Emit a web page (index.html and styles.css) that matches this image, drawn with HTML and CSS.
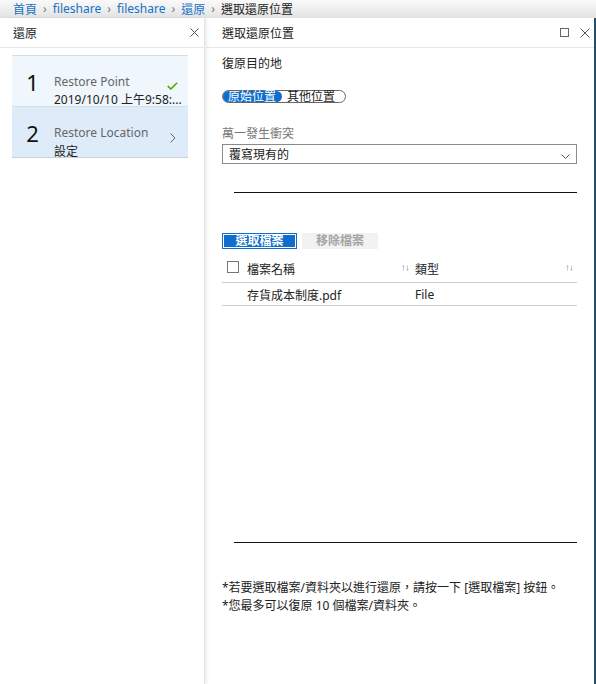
FILE: index.html
```html
<!DOCTYPE html>
<html lang="zh-Hant">
<head>
    <meta charset="UTF-8">
    <title>選取還原位置</title>
    <link rel="stylesheet" href="styles.css">
</head>
<body>

    <div class="crumbs">
        <a>首頁</a><span class="sep">›</span><a>fileshare</a><span class="sep">›</span><a>fileshare</a><span class="sep">›</span><a>還原</a><span class="sep">›</span><span class="cur">選取還原位置</span>
    </div>

    <div class="blades">

        <section class="blade left">
            <div class="blade-head">
                <h1>還原</h1>
                <div class="head-icons">
                    <svg width="9" height="9" viewBox="0 0 9 9"><path d="M0.5 0.5L8.5 8.5M8.5 0.5L0.5 8.5" stroke="#555" stroke-width="1" fill="none"/></svg>
                </div>
            </div>
            <div class="steps">
                <div class="step done">
                    <div class="num">1</div>
                    <div class="step-text">
                        <div class="step-title">
                            <span>Restore Point</span>
                            <svg class="step-icon" width="11" height="8" viewBox="0 0 11 8"><path d="M0.8 4L3.8 7L10.2 0.8" stroke="#57a300" stroke-width="1.6" fill="none"/></svg>
                        </div>
                        <div class="step-sub">2019/10/10 上午9:58:...</div>
                    </div>
                </div>
                <div class="step active">
                    <div class="num">2</div>
                    <div class="step-text">
                        <div class="step-title">
                            <span>Restore Location</span>
                            <svg class="step-icon" width="6" height="10" viewBox="0 0 6 10"><path d="M0.5 0.5L5 5L0.5 9.5" stroke="#666" stroke-width="1" fill="none"/></svg>
                        </div>
                        <div class="step-sub">設定</div>
                    </div>
                </div>
            </div>
        </section>

        <section class="blade right">
            <div class="blade-head">
                <h1>選取還原位置</h1>
                <div class="head-icons">
                    <svg width="9" height="9" viewBox="0 0 9 9"><rect x="0.5" y="0.5" width="8" height="8" stroke="#666" fill="none"/></svg>
                    <svg width="10" height="10" viewBox="0 0 10 10"><path d="M0.5 0.5L9.5 9.5M9.5 0.5L0.5 9.5" stroke="#555" stroke-width="1" fill="none"/></svg>
                </div>
            </div>

            <div class="blade-body">
                <div class="section-title">復原目的地</div>

                <div class="toggle">
                    <span class="opt on">原始位置</span>
                    <span class="opt">其他位置</span>
                </div>

                <div class="field-label">萬一發生衝突</div>
                <div class="dropdown">
                    <span>覆寫現有的</span>
                    <svg width="9" height="5" viewBox="0 0 9 5"><path d="M0.5 0.5L4.5 4.5L8.5 0.5" stroke="#555" fill="none"/></svg>
                </div>

                <div class="rule top-rule"></div>

                <div class="buttons">
                    <button class="btn primary">選取檔案</button>
                    <button class="btn disabled">移除檔案</button>
                </div>

                <table class="files">
                    <thead>
                        <tr>
                            <th class="chk"><span class="box"></span></th>
                            <th class="name">檔案名稱 <svg class="sort" width="7" height="6" viewBox="0 0 7 6"><path d="M1.5 5.5V0.5M0.3 1.7L1.5 0.5L2.7 1.7M5.5 0.5V5.5M4.3 4.3L5.5 5.5L6.7 4.3" stroke="#bbb" stroke-width="0.8" fill="none"/></svg></th>
                            <th class="type">類型 <svg class="sort" width="7" height="6" viewBox="0 0 7 6"><path d="M1.5 5.5V0.5M0.3 1.7L1.5 0.5L2.7 1.7M5.5 0.5V5.5M4.3 4.3L5.5 5.5L6.7 4.3" stroke="#bbb" stroke-width="0.8" fill="none"/></svg></th>
                        </tr>
                    </thead>
                    <tbody>
                        <tr>
                            <td class="chk"></td>
                            <td class="name">存貨成本制度.pdf</td>
                            <td class="type">File</td>
                        </tr>
                    </tbody>
                </table>

                <div class="rule bottom-rule"></div>

                <div class="notes">
                    <p>*若要選取檔案/資料夾以進行還原，請按一下 [選取檔案] 按鈕。</p>
                    <p>*您最多可以復原 10 個檔案/資料夾。</p>
                </div>
            </div>
        </section>

    </div>

</body>
</html>
```

FILE: styles.css
```css
body {
    margin: 0;
    padding: 0;
    width: 596px;
    height: 684px;
    overflow: hidden;
    background: #fff;
    color: #1a1a1a;
    font-family: "Noto Sans", "Noto Sans CJK TC", sans-serif;
    font-size: 12px;
}

/* breadcrumb */
.crumbs {
    height: 17px;
    display: flex;
    align-items: center;
    padding-left: 13px;
    background: linear-gradient(#fafafa, #e4e4e4);
    border-bottom: 1px solid #e2e2e2;
    white-space: nowrap;
    font-size: 12px;
}
.crumbs a {
    color: #1672c4;
}
.crumbs .sep {
    color: #777;
    margin: 0 6px;
}
.crumbs .cur {
    color: #222;
}

.blades {
    display: flex;
    height: 666px;
}

.blade {
    display: flex;
    flex-direction: column;
    background: #fff;
}
.blade.left {
    width: 204px;
    box-shadow: 2px 0 3px rgba(0, 0, 0, 0.08);
    border-right: 1px solid #e4e4e4;
    z-index: 1;
}
.blade.right {
    flex: 1;
    border-right: 2px solid #1f4e6e;
    margin-left: 1px;
}

.blade-head {
    height: 29px;
    display: flex;
    align-items: center;
    justify-content: space-between;
    border-bottom: 1px solid #e6e6e6;
}
.blade-head h1 {
    margin: 0;
    font-size: 12px;
    font-weight: normal;
    color: #222;
}
.left .blade-head {
    padding: 0 5px 0 13px;
}
.right .blade-head {
    padding: 0 4px 0 16px;
}
.head-icons {
    display: flex;
    align-items: center;
    gap: 11px;
}

/* steps */
.steps {
    margin: 7px 16px 0 12px;
}
.step {
    height: 51px;
    display: flex;
    align-items: flex-start;
    box-sizing: border-box;
    padding-top: 17px;
    border-top: 1px solid #d6dde5;
    background: #eff6fc;
}
.step.active {
    height: 52px;
    background: #deecf9;
    border-bottom: 1px solid #c8d2dc;
}
.num {
    flex-shrink: 0;
    width: 41px;
    text-align: center;
    font-size: 22px;
    line-height: 18px;
    color: #111;
}
.step-text {
    flex: 1;
    min-width: 0;
    line-height: 18px;
    margin-left: 1px;
}
.step-title {
    display: flex;
    justify-content: space-between;
    color: #666;
}
.step-sub {
    color: #222;
    white-space: nowrap;
}
.step.done .step-icon {
    margin: 9px 10px 0 0;
}
.step.active .step-icon {
    margin: 9px 12px 0 0;
}

/* right body */
.blade-body {
    padding: 8px 17px 0 16px;
}
.section-title {
    line-height: 16px;
    color: #222;
}

.toggle {
    display: inline-flex;
    align-items: center;
    margin-top: 18px;
    height: 11px;
    border: 1px solid #666;
    border-radius: 7px;
    padding-right: 6px;
    line-height: 11px;
}
.toggle .opt {
    padding: 0 4px;
    color: #222;
}
.toggle .opt.on {
    background: #0f6ecd;
    color: #fff;
    border-radius: 6px;
    padding: 0 6px 0 5px;
    margin-right: 1px;
}

.field-label {
    margin-top: 21px;
    line-height: 16px;
    color: #777;
}
.dropdown {
    height: 18px;
    border: 1px solid #8a8a8a;
    display: flex;
    align-items: center;
    justify-content: space-between;
    padding: 0 6px 0 6px;
    margin-top: 2px;
}
.dropdown svg {
    margin-top: 4px;
}

.rule {
    height: 1px;
    background: #111;
    margin-left: 12px;
}
.top-rule {
    margin-top: 28px;
}
.bottom-rule {
    margin-top: 236px;
}

.buttons {
    display: flex;
    gap: 5px;
    margin-top: 40px;
}
.btn {
    font-family: inherit;
    font-size: 12px;
    height: 16px;
    padding: 0;
    line-height: 14px;
    border: none;
}
.btn.primary {
    width: 75px;
    background: #0f6ecd;
    color: #fff;
    font-weight: bold;
    box-shadow: inset 0 0 0 1px #0f6ecd, inset 0 0 0 2px #fff;
}
.btn.disabled {
    width: 76px;
    background: #f2f2f2;
    color: #a6a6a6;
    font-weight: bold;
}

.files {
    width: 100%;
    border-collapse: collapse;
    margin-top: 6px;
}
.files th {
    font-weight: normal;
    text-align: left;
    height: 27px;
    border-bottom: 1px solid #cfcfcf;
    padding: 0;
    color: #222;
}
.files td {
    height: 21px;
    border-bottom: 1px solid #cfcfcf;
    padding: 1px 0 0;
    color: #222;
}
.files .chk {
    width: 25px;
}
.files .box {
    display: block;
    width: 10px;
    height: 10px;
    border: 1px solid #777;
    margin: -3px 0 0 5px;
}
.files .name {
    width: 168px;
}
.files th .sort {
    float: right;
    margin: 5px 6px 0 0;
}
.files th.type .sort {
    margin-right: 4px;
}

.notes {
    margin-top: 36px;
}
.notes p {
    margin: 0;
    line-height: 18px;
    color: #222;
}
```
